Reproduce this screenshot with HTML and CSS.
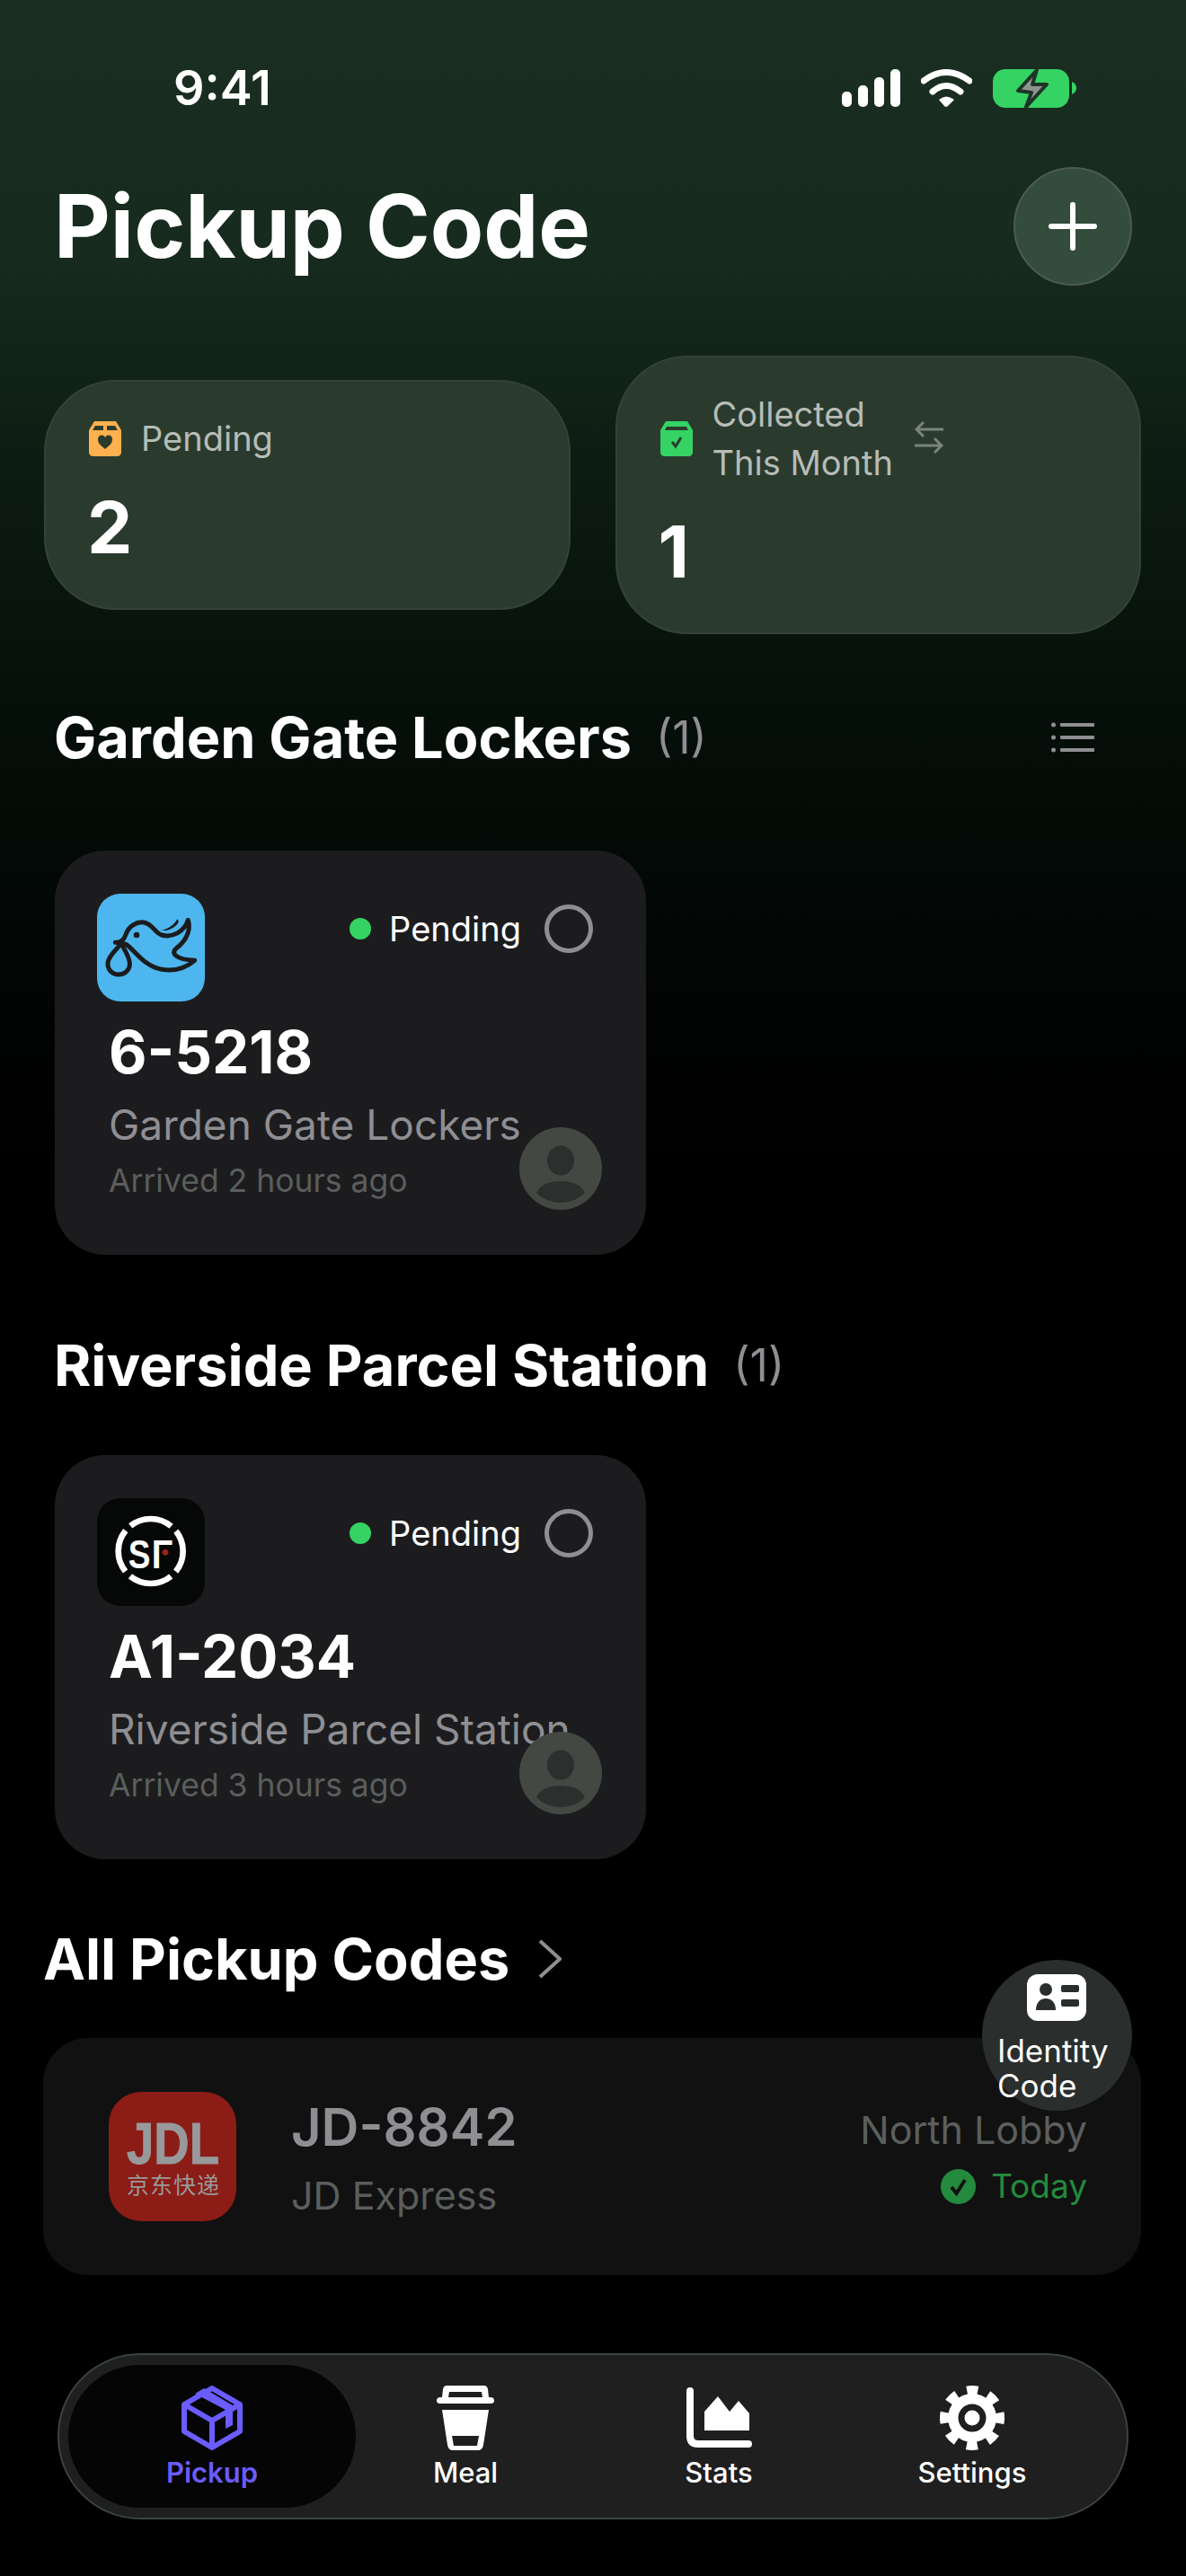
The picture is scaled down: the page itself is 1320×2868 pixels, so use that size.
FILE: index.html
```html
<!DOCTYPE html>
<html lang="en">
<head>
    <meta charset="UTF-8">
    <meta name="viewport" content="width=device-width, initial-scale=1.0">
    <title>Pickup Code</title>
    <link rel="stylesheet" href="styles.css">
</head>
<body>
    <div class="status-bar">
        <span class="clock">9:41</span>
        <div class="status-icons">
            <svg width="65" height="42" viewBox="0 0 65 42"><g fill="#fff"><rect x="0" y="25" width="11" height="17" rx="5"/><rect x="18" y="18" width="11" height="24" rx="5"/><rect x="36" y="9" width="11" height="33" rx="5"/><rect x="54" y="0" width="11" height="42" rx="5"/></g></svg>
            <svg width="57" height="42" viewBox="0 0 57 42"><g fill="none" stroke="#fff" stroke-width="7" stroke-linecap="round"><path d="M3 13 Q28 -6 54 13"/><path d="M13 25 Q28 12 44 25"/></g><path d="M20 34 Q28 27 37 34 L30 41 Q28 43 26 41 Z" fill="#fff"/></svg>
            <svg width="93" height="43" viewBox="0 0 93 43"><rect x="0" y="0" width="85" height="43" rx="14" fill="#34d364"/><path d="M88 14 Q93 16 93 21 Q93 26 88 28 Z" fill="#34d364"/><path d="M49 1 L28 24 L43 26 L37 42 L60 17 L44 17 Z" fill="#8f9490" stroke="#1d3526" stroke-width="4" stroke-linejoin="round"/></svg>
        </div>
    </div>

    <div class="title-row">
        <h1 class="page-title">Pickup Code</h1>
        <button class="add-btn">
            <svg width="54" height="54" viewBox="0 0 54 54"><path d="M27 3V51M3 27H51" stroke="#fff" stroke-width="6" stroke-linecap="round"/></svg>
        </button>
    </div>

    <div class="stats">
        <div class="stat-card">
            <div class="stat-head">
                <svg class="stat-icon" width="36" height="39" viewBox="0 0 36 39"><path d="M6 0H30L36 10V34Q36 39 31 39H5Q0 39 0 34V10Z" fill="#ffb04f"/><path d="M7 5H16V10H4ZM20 5H29L32 10H20Z" fill="#2a3b2e"/><path d="M18 31C12 26 10 24 10 20C10 15 16 14 18 18C20 14 26 15 26 20C26 24 24 26 18 31Z" fill="#2a3b2e"/></svg>
                <span class="stat-label">Pending</span>
            </div>
            <div class="stat-value">2</div>
        </div>
        <div class="stat-card">
            <div class="stat-head">
                <svg class="stat-icon" width="36" height="39" viewBox="0 0 36 39"><path d="M6 0H30L36 10V34Q36 39 31 39H5Q0 39 0 34V10Z" fill="#34d364"/><path d="M7 6H29L31 10H5Z" fill="#2a3b2e"/><path d="M13 23L17 28L23 18" fill="none" stroke="#2a3b2e" stroke-width="3"/></svg>
                <span class="stat-label">Collected<br>This Month</span>
                <svg class="swap-icon" width="32" height="38" viewBox="0 0 32 38"><g fill="none" stroke="#7a847c" stroke-width="3"><path d="M32 9H2M10 1L2 9L10 17"/><path d="M0 27H30M22 19L30 27L22 35"/></g></svg>
            </div>
            <div class="stat-value">1</div>
        </div>
    </div>

    <div class="section-head first">
        <h2 class="section-title">Garden Gate Lockers</h2>
        <span class="section-count">(1)</span>
        <svg class="list-icon" width="48" height="34" viewBox="0 0 48 34"><g fill="#8e8e93"><circle cx="2.500" cy="3" r="2.500"/><circle cx="2.500" cy="17" r="2.500"/><circle cx="2.500" cy="31" r="2.500"/><rect x="10" y="1" width="38" height="4" rx="1"/><rect x="10" y="15" width="38" height="4" rx="1"/><rect x="10" y="29" width="38" height="4" rx="1"/></g></svg>
    </div>

    <div class="code-card">
        <div class="code-top">
            <svg class="carrier-logo bird" width="120" height="120" viewBox="54 42 360 360">
                <path d="M115 205C135 205 145 195 150 178C160 150 185 135 210 138C240 142 245 172 270 180C305 190 345 170 358 130C370 170 345 205 318 225C300 240 315 262 380 265C350 290 310 302 270 295C215 285 185 240 160 218C150 208 135 205 115 205Z" fill="none" stroke="#1c1c1e" stroke-width="15" stroke-linejoin="round"/>
                <path d="M135 208C120 228 92 250 90 272C88 300 110 312 125 312C148 312 165 295 163 272C160 250 145 228 135 208Z" fill="none" stroke="#1c1c1e" stroke-width="15" stroke-linejoin="round"/>
                <path d="M270 165C295 158 312 145 322 127C332 135 322 150 300 160C290 165 280 166 270 165Z" fill="#1c1c1e"/>
                <circle cx="186" cy="180" r="10" fill="#1c1c1e"/>
            </svg>
            <div class="code-status">
                <span class="status-dot"></span>
                <span class="status-text">Pending</span>
                <span class="select-ring"></span>
            </div>
        </div>
        <div class="code-text">6-5218</div>
        <div class="code-place">Garden Gate Lockers</div>
        <div class="code-time">Arrived 2 hours ago</div>
        <svg class="avatar" width="92" height="92" viewBox="0 0 92 92"><circle cx="46" cy="46" r="46" fill="#434843"/><ellipse cx="46" cy="37" rx="15" ry="16.500" fill="#2b2f2d"/><path d="M19 73C24 63 34 60 46 60C58 60 68 63 73 73C66 80 56 84 46 84C36 84 26 80 19 73Z" fill="#2b2f2d"/></svg>
    </div>

    <div class="section-head second">
        <h2 class="section-title">Riverside Parcel Station</h2>
        <span class="section-count">(1)</span>
    </div>

    <div class="code-card">
        <div class="code-top">
            <svg class="carrier-logo sf" width="120" height="120" viewBox="54 51 360 360">
                <circle cx="233" cy="228" r="108" fill="none" stroke="#fff" stroke-width="20" stroke-dasharray="147 22.650" stroke-dashoffset="73.500"/>
                <text class="sf-letter" x="158" y="284" textLength="74" lengthAdjust="spacingAndGlyphs">S</text>
                <text class="sf-letter" x="236" y="284" textLength="70" lengthAdjust="spacingAndGlyphs">Γ</text>
                <circle cx="282" cy="232" r="10" fill="#a0211c"/>
            </svg>
            <div class="code-status">
                <span class="status-dot"></span>
                <span class="status-text">Pending</span>
                <span class="select-ring"></span>
            </div>
        </div>
        <div class="code-text">A1-2034</div>
        <div class="code-place">Riverside Parcel Station</div>
        <div class="code-time">Arrived 3 hours ago</div>
        <svg class="avatar" width="92" height="92" viewBox="0 0 92 92"><circle cx="46" cy="46" r="46" fill="#434843"/><ellipse cx="46" cy="37" rx="15" ry="16.500" fill="#2b2f2d"/><path d="M19 73C24 63 34 60 46 60C58 60 68 63 73 73C66 80 56 84 46 84C36 84 26 80 19 73Z" fill="#2b2f2d"/></svg>
    </div>

    <div class="all-head">
        <h2 class="section-title">All Pickup Codes</h2>
        <svg width="26" height="44" viewBox="0 0 26 44"><path d="M2 2L24 22L2 42" fill="none" stroke="#8e8e93" stroke-width="4"/></svg>
    </div>

    <div class="all-wrap">
        <div class="history-card">
            <svg class="jd-logo" width="142" height="144" viewBox="0 0 142 144">
                <rect width="142" height="144" rx="36" fill="#8c1c16"/>
                <text class="jd-letters" x="20" y="80" textLength="103" lengthAdjust="spacingAndGlyphs">JDL</text>
                <text class="jd-chinese" x="20" y="113" textLength="103">京东快递</text>
            </svg>
            <div class="history-main">
                <div class="history-code">JD-8842</div>
                <div class="history-carrier">JD Express</div>
            </div>
            <div class="history-side">
                <div class="history-place">North Lobby</div>
                <div class="history-date">
                    <svg width="39" height="39" viewBox="0 0 39 39"><circle cx="19.500" cy="19.500" r="19.500" fill="#248a3d"/><path d="M12 20L17.500 27L27 12" fill="none" stroke="#111" stroke-width="4"/></svg>
                    <span>Today</span>
                </div>
            </div>
        </div>
        <div class="identity-btn">
            <svg width="66" height="52" viewBox="0 0 66 52"><rect width="66" height="52" rx="12" fill="#fff"/><circle cx="21" cy="17" r="7" fill="#2a2e2c"/><path d="M10 40C10 31 15 27 21 27C27 27 32 31 32 40Z" fill="#2a2e2c"/><rect x="38" y="12" width="20" height="8" rx="2" fill="#2a2e2c"/><rect x="38" y="28" width="20" height="8" rx="2" fill="#2a2e2c"/></svg>
            <span class="identity-text">Identity<br>Code</span>
        </div>
    </div>

    <div class="tab-bar">
        <div class="tab active">
            <svg width="68" height="72" viewBox="0 0 68 72"><g fill="none" stroke="#6b5cff" stroke-width="6" stroke-linejoin="round"><path d="M34 3L65 21V51L34 69L3 51V21Z"/><path d="M3 21L34 39L65 21M34 39V69"/></g><path d="M15 9L25 3L57 22V44L49 48V27Z" fill="#6b5cff"/></svg>
            <span class="tab-label">Pickup</span>
        </div>
        <div class="tab">
            <svg width="64" height="72" viewBox="0 0 64 72"><path fill-rule="evenodd" d="M11 0H53Q56 0 57 4L58 13H60Q64 13 64 17V17Q64 20 60 20H4Q0 20 0 17V17Q0 13 4 13H6L7 4Q8 0 11 0ZM14 7L13 13H51L50 7ZM6 27H58L52 66Q51 72 46 72H18Q13 72 12 66ZM17 56L19 67H45L47 56Z" fill="#fff"/></svg>
            <span class="tab-label">Meal</span>
        </div>
        <div class="tab">
            <svg width="73" height="72" viewBox="0 0 73 72"><path d="M4 6V56Q4 65 13 65H69" fill="none" stroke="#fff" stroke-width="8" stroke-linecap="round"/><path d="M20 50V29L35 12L48 29L58 17L70 31V50Z" fill="#fff"/></svg>
            <span class="tab-label">Stats</span>
        </div>
        <div class="tab">
            <svg width="72" height="72" viewBox="0 0 72 72"><circle cx="36" cy="36" r="27" fill="#fff"/><circle cx="36" cy="36" r="31" fill="none" stroke="#fff" stroke-width="10" stroke-dasharray="12.170 12.170" stroke-dashoffset="6"/><circle cx="36" cy="36" r="12" fill="#fff" stroke="#1f1f1f" stroke-width="7"/></svg>
            <span class="tab-label">Settings</span>
        </div>
    </div>
</body>
</html>
```

FILE: styles.css
```css
* {
    box-sizing: border-box;
}

body {
    margin: 0;
    width: 1320px;
    height: 2868px;
    overflow: hidden;
    font-family: Inter, "Noto Sans", sans-serif;
    color: #fff;
    background: linear-gradient(180deg, #1a2e21 0, #162a1d 300px, #0d1c12 520px, #050f09 800px, #020604 1050px, #000 1300px);
}

svg {
    display: block;
    flex: none;
}

.status-bar {
    display: flex;
    justify-content: space-between;
    align-items: center;
    height: 44px;
    margin-top: 76px;
    padding: 0 122px 0 193px;
}
.clock {
    font-size: 54px;
    line-height: 44px;
    font-weight: 600;
}
.status-icons {
    display: flex;
    align-items: center;
    gap: 23px;
}

.title-row {
    display: flex;
    justify-content: space-between;
    align-items: center;
    margin-top: 66px;
    padding: 0 60px 0 60px;
}
.page-title {
    margin: 0;
    font-size: 97px;
    line-height: 132px;
    font-weight: 700;
}
.add-btn {
    display: flex;
    align-items: center;
    justify-content: center;
    width: 132px;
    height: 132px;
    padding: 0;
    background-color: #344c3c;
    border: 2px solid #4c5c50;
    border-radius: 50%;
}

.stats {
    display: flex;
    align-items: center;
    gap: 50px;
    margin-top: 78px;
    padding: 0 50px 0 49px;
}
.stat-card {
    flex: 1;
    padding: 36px 48px 50px;
    background-color: #2a3b2e;
    border: 2px solid #334337;
    border-radius: 80px;
}
.stat-head {
    display: flex;
    align-items: center;
    gap: 22px;
}
.stat-label {
    font-size: 38px;
    line-height: 54px;
    color: #b7bcb7;
}
.swap-icon {
    margin-left: 2px;
}
.stat-value {
    margin: 32px 0 0 -2px;
    font-size: 80px;
    line-height: 80px;
    font-weight: 700;
}

.section-head {
    display: flex;
    align-items: center;
    padding: 0 102px 0 60px;
}
.section-head.first {
    margin-top: 75px;
}
.section-head.second {
    margin-top: 83px;
}
.section-title {
    margin: 0;
    font-size: 63px;
    line-height: 80px;
    font-weight: 700;
    white-space: nowrap;
}
.section-count {
    margin-left: 27px;
    font-size: 50px;
    color: #8e8e93;
}
.list-icon {
    margin-left: auto;
}

.code-card {
    position: relative;
    width: 658px;
    height: 450px;
    margin: 60px 0 0 61px;
    padding: 48px 59px 0 47px;
    background-color: #1c1c1e;
    border-radius: 56px;
    overflow: hidden;
}
.section-head.first + .code-card {
    margin-top: 86px;
}
.code-top {
    display: flex;
    justify-content: space-between;
    align-items: flex-start;
}
.carrier-logo {
    border-radius: 26px;
}
.carrier-logo.bird {
    background-color: #4db6ee;
}
.carrier-logo.sf {
    background-color: #060807;
}
.sf-letter {
    font-family: "Liberation Sans", sans-serif;
    font-size: 132px;
    font-weight: 700;
    fill: #fff;
}
.code-status {
    display: flex;
    align-items: center;
    margin-top: 12px;
}
.status-dot {
    width: 24px;
    height: 24px;
    background-color: #34d364;
    border-radius: 50%;
}
.status-text {
    margin: 0 26px 0 20px;
    font-size: 38px;
    line-height: 54px;
}
.select-ring {
    width: 54px;
    height: 54px;
    border: 5px solid #8e8e93;
    border-radius: 50%;
}
.code-text {
    margin: 17px 0 0 13px;
    font-size: 65.500px;
    line-height: 80px;
    font-weight: 700;
}
.code-place {
    margin: 10px 0 0 13px;
    font-size: 46px;
    line-height: 60px;
    color: #8e8e93;
    white-space: nowrap;
}
.code-time {
    margin: 10px 0 0 13px;
    font-size: 35.500px;
    line-height: 46px;
    color: #5a5e5c;
}
.avatar {
    position: absolute;
    right: 49px;
    bottom: 50px;
}

.all-head {
    display: flex;
    align-items: center;
    gap: 32px;
    margin-top: 71px;
    padding-left: 48px;
}

.all-wrap {
    position: relative;
    margin: 48px 50px 0 48px;
}
.history-card {
    display: flex;
    align-items: flex-start;
    height: 264px;
    padding: 60px 60px 0 73px;
    background-color: #111;
    border-radius: 50px;
}
.jd-letters {
    font-family: "Liberation Sans", sans-serif;
    font-size: 64px;
    font-weight: 700;
    fill: #98999b;
    stroke: #98999b;
}
.jd-chinese {
    font-family: "Noto Sans CJK SC", sans-serif;
    font-size: 25px;
    fill: #98999b;
}
.history-main {
    margin: 4px 0 0 61px;
}
.history-code {
    font-size: 58px;
    line-height: 70px;
    font-weight: 600;
    color: #8e8e93;
}
.history-carrier {
    margin-top: 11px;
    font-size: 43px;
    line-height: 60px;
    color: #5a5e5c;
}
.history-side {
    margin: 12px 0 0 auto;
    text-align: right;
}
.history-place {
    font-size: 43px;
    line-height: 60px;
    color: #5b5f5d;
}
.history-date {
    display: flex;
    justify-content: flex-end;
    align-items: center;
    gap: 17px;
    margin-top: 3px;
    font-size: 37px;
    line-height: 60px;
    color: #248a3d;
}

/* floats over the card corner */
.identity-btn {
    position: absolute;
    top: -87px;
    right: 10px;
    width: 167px;
    height: 168px;
    padding: 16px 0 0 17px;
    background-color: #2a2e2c;
    border-radius: 50%;
}
.identity-btn svg {
    margin-left: 33px;
}
.identity-text {
    display: block;
    margin-top: 14px;
    font-size: 35px;
    line-height: 39px;
}

.tab-bar {
    display: flex;
    gap: 38px;
    width: 1192px;
    height: 185px;
    margin: 87px 0 0 64px;
    padding: 11px 0 11px 10px;
    background-color: #1f1f1f;
    border: 2px solid #3a453c;
    border-radius: 92px;
}
.tab {
    display: flex;
    flex-direction: column;
    align-items: center;
    width: 244px;
    padding-top: 23px;
}
.tab.active {
    width: 320px;
    margin-right: -38px;
    background-color: #050505;
    border-radius: 80px;
}
.tab-label {
    margin-top: 5px;
    font-size: 31px;
    line-height: 40px;
    font-weight: 500;
}
.tab.active .tab-label {
    color: #6b5cff;
    font-weight: 600;
}
```
